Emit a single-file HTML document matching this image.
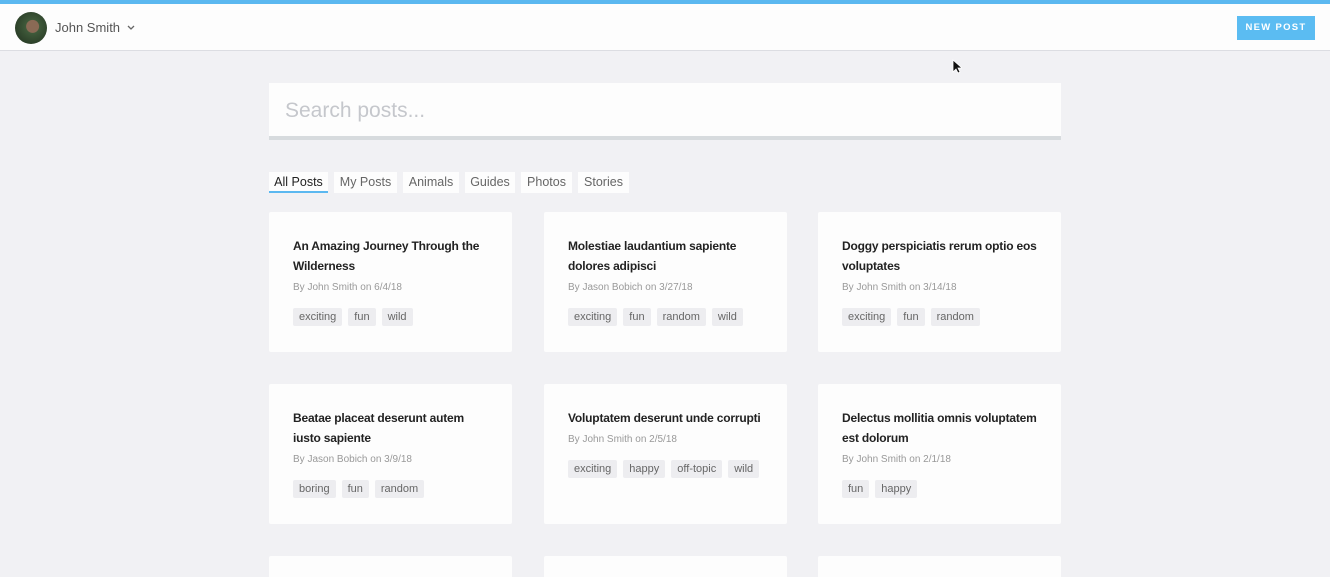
<!DOCTYPE html>
<html><head><style>
*{margin:0;padding:0;box-sizing:border-box}
html,body{width:1330px;height:577px;overflow:hidden}
body{background:#f1f1f4;font-family:"Liberation Sans",sans-serif;position:relative}
.top{position:absolute;left:0;top:0;width:1330px;height:4px;background:#5bb8f0}
.hdr{position:absolute;left:0;top:4px;width:1330px;height:47px;background:#fdfdfd;border-bottom:1px solid #dcdde2}
.av{position:absolute;left:15px;top:8px;width:32px;height:32px;border-radius:50%;background:radial-gradient(circle at 55% 45%,#8a6a55 0 25%,#3f5a3a 27%,#2c4029 70%)}
.name{position:absolute;left:55px;top:16px;font-size:13px;color:#555}
.car{position:absolute;left:127px;top:21px}
.btn{position:absolute;left:1237px;top:12px;width:78px;height:24px;background:#5bbcf2;color:#fff;font-size:9.5px;letter-spacing:1.3px;text-align:center;line-height:24px;font-weight:bold}
.search{position:absolute;left:269px;top:83px;width:792px;height:57px;background:#fdfdfd;border-bottom:4px solid #d7dbde}
.search span{position:absolute;left:16px;top:16px;font-size:21px;color:#c5c7cc}
.tab{position:absolute;top:172px;height:21px;background:#fdfdfd;font-size:12.5px;color:#666;line-height:21px;text-align:center}
.tab.a{color:#222;border-bottom:2px solid #5bb8f0}
.card{position:absolute;width:243px;height:140px;background:#fdfdfd;border-radius:2px;padding:24px 10px 24px 24px}
.card h3{font-size:12px;letter-spacing:-0.2px;font-weight:bold;color:#222;line-height:20px;margin-bottom:6px;padding-right:10px}
.card p{font-size:10px;color:#999;margin-bottom:14px}
.tags{white-space:nowrap}
.tag{display:inline-block;background:#ededf0;color:#666;font-size:11px;padding:3px 6px;margin-right:6px;border-radius:2px}
</style></head><body>
<div class="top"></div>
<div class="hdr"><div class="av"></div><div class="name">John Smith</div><svg class="car" width="8" height="5" viewBox="0 0 8 5"><path d="M1 1L4 4L7 1" fill="none" stroke="#666" stroke-width="1.3"/></svg><div class="btn">NEW POST</div></div>
<div class="search"><span>Search posts...</span></div>
<div class="tab a" style="left:269px;width:59px">All Posts</div>
<div class="tab" style="left:334px;width:63px">My Posts</div>
<div class="tab" style="left:403px;width:56px">Animals</div>
<div class="tab" style="left:465px;width:50px">Guides</div>
<div class="tab" style="left:521px;width:51px">Photos</div>
<div class="tab" style="left:578px;width:51px">Stories</div>

<div class="card" style="left:269px;top:212px"><h3>An Amazing Journey Through the Wilderness</h3><p>By John Smith on 6/4/18</p><div class="tags"><span class="tag">exciting</span><span class="tag">fun</span><span class="tag">wild</span></div></div>
<div class="card" style="left:544px;top:212px"><h3>Molestiae laudantium sapiente dolores adipisci</h3><p>By Jason Bobich on 3/27/18</p><div class="tags"><span class="tag">exciting</span><span class="tag">fun</span><span class="tag">random</span><span class="tag">wild</span></div></div>
<div class="card" style="left:818px;top:212px"><h3>Doggy perspiciatis rerum optio eos voluptates</h3><p>By John Smith on 3/14/18</p><div class="tags"><span class="tag">exciting</span><span class="tag">fun</span><span class="tag">random</span></div></div>
<div class="card" style="left:269px;top:384px"><h3>Beatae placeat deserunt autem iusto sapiente</h3><p>By Jason Bobich on 3/9/18</p><div class="tags"><span class="tag">boring</span><span class="tag">fun</span><span class="tag">random</span></div></div>
<div class="card" style="left:544px;top:384px"><h3>Voluptatem deserunt unde corrupti</h3><p>By John Smith on 2/5/18</p><div class="tags"><span class="tag">exciting</span><span class="tag">happy</span><span class="tag">off-topic</span><span class="tag">wild</span></div></div>
<div class="card" style="left:818px;top:384px"><h3>Delectus mollitia omnis voluptatem est dolorum</h3><p>By John Smith on 2/1/18</p><div class="tags"><span class="tag">fun</span><span class="tag">happy</span></div></div>
<div class="card" style="left:269px;top:556px"></div>
<div class="card" style="left:544px;top:556px"></div>
<div class="card" style="left:818px;top:556px"></div>
<svg style="position:absolute;left:952px;top:59px" width="10" height="15" viewBox="0 0 10 15"><path d="M1 1V13L4 10L6 14L8 13L6 9H10Z" fill="#111" stroke="#fff" stroke-width="0.8"/></svg>
</body></html>
